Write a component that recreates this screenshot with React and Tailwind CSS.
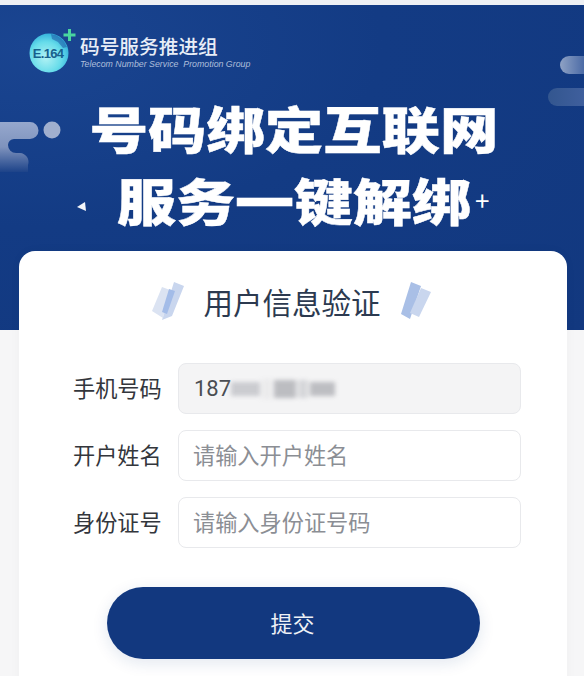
const cjk = "font-['Noto_Sans_CJK_SC','Noto_Sans',sans-serif]";

function Logo() {
  return (
    <svg width="48" height="48" viewBox="0 0 48 48" className="shrink-0">
      <defs>
        <radialGradient id="globe" cx="42%" cy="62%" r="62%">
          <stop offset="0%" stopColor="#b2f2f4" />
          <stop offset="65%" stopColor="#66dcea" />
          <stop offset="100%" stopColor="#35b4dc" />
        </radialGradient>
      </defs>
      <circle cx="20" cy="25" r="19.5" fill="url(#globe)" />
      <path d="M22 6 A19 19 0 0 1 38 19 L34 20 L29 14 L23 11 Z" fill="#1f5aa5" opacity="0.55" />
      <path d="M39 1 h3 v4.5 h4.5 v3 h-4.5 v4.5 h-3 v-4.5 h-4.5 v-3 h4.5 z" fill="#49d6a0" />
      <text x="19" y="30" textAnchor="middle" fontSize="13" fontWeight="700" fill="#17608c" fontFamily="'Liberation Sans', sans-serif" letterSpacing="-0.7">E.164</text>
    </svg>
  );
}

function Stripes({ mirror }) {
  return (
    <svg width="34" height="40" viewBox="0 0 34 40" className="shrink-0 blur-[0.6px]">
      {mirror ? (
        <>
          <polygon points="12,1 22,5 11,38 2,33" fill="#a9bfe6" />
          <polygon points="22,7 32,11 20,36 11,32" fill="#c9d6ee" />
        </>
      ) : (
        <>
          <polygon points="23,1 33,5 21,35 11,39" fill="#c9d6ee" />
          <polygon points="11,6 19,9 12,37 1,30" fill="#dbe3f2" />
          <polygon points="18,8 24,10 16,33 11,31" fill="#a3bce8" />
        </>
      )}
    </svg>
  );
}

function Field({ label, placeholder }) {
  return (
    <div className="flex items-center">
      <span className="w-[105px] shrink-0 pb-[2px] text-[22.2px] leading-none text-[#33363c]">{label}</span>
      <input
        readOnly
        placeholder={placeholder}
        className={`h-[51px] w-[343px] rounded-lg border border-[#e8e9ec] bg-white pb-[3px] pl-[14px] pr-[15px] text-[22.2px] outline-none placeholder:text-[#8b8e94] ${cjk}`}
      />
    </div>
  );
}

export default function App() {
  return (
    <div className={`relative h-[676px] w-[584px] overflow-hidden bg-[#f6f6f7] ${cjk}`}>
      <div className="h-[5px] bg-[#eef0f4]" />

      <header className="relative h-[325px] overflow-hidden bg-[radial-gradient(ellipse_at_5%_12%,#1a4591_0%,#133b84_45%,#12387f_100%)] pt-[23px]">
        {/* decorative shapes */}
        <div className="absolute right-0 top-[51px] h-[18px] w-6 rounded-l-full bg-gradient-to-r from-[#8fa2c4] to-[#4c6ba6]" />
        <div className="absolute right-0 top-[83px] h-[18px] w-9 rounded-l-full bg-gradient-to-r from-[#33568f] to-[#3f5f9d]" />
        <svg width="68" height="52" viewBox="0 0 68 52" className="absolute left-0 top-[116px]">
          <defs>
            <linearGradient id="swoosh" x1="0" y1="0" x2="0" y2="1">
              <stop offset="0%" stopColor="#96a8cd" />
              <stop offset="50%" stopColor="#7f93bd" />
              <stop offset="100%" stopColor="#1d4389" />
            </linearGradient>
          </defs>
          <path d="M0 1 H30 A8.5 8.5 0 0 1 30 18 H14 A6 6 0 0 0 8 24 A8 8 0 0 0 16 32 H20 A9 9 0 0 1 28 44 V51 H0 Z" fill="url(#swoosh)" />
          <circle cx="52" cy="9" r="8.5" fill="#a0afce" />
        </svg>
        <svg width="10" height="10" viewBox="0 0 10 10" className="absolute left-[77px] top-[197px]">
          <polygon points="0,5 8,0 9,9" fill="#f4f6fa" />
        </svg>

        <div className="flex items-start pl-[29px]">
          <Logo />
          <div className="ml-[3px] mt-[6px]">
            <div className="text-[19.7px] font-medium leading-[23px] text-[#e8eef7]">码号服务推进组</div>
            <div className="mt-[2px] whitespace-nowrap font-['Liberation_Sans',sans-serif] text-[8.8px] italic leading-[11px] text-[#aebfdb]">
              Telecom Number Service&nbsp; Promotion Group
            </div>
          </div>
        </div>

        <h1 className="mt-[17px] flex flex-col items-center text-white">
          <span className="ml-[4px] scale-y-[0.85] text-[58.4px] font-black leading-[70px] [-webkit-text-stroke:0.5px_white]">号码绑定互联网</span>
          <span className="ml-[4px] mt-[2px] scale-y-[0.85] text-[59px] font-black leading-[70px] [-webkit-text-stroke:0.5px_white]">
            服务一键解绑
          </span>
          <span className="absolute left-[475px] top-[182px] text-[26px] font-normal leading-none">+</span>
        </h1>
      </header>

      <main className="relative z-10 ml-[19px] -mt-[79px] h-[500px] w-[548px] rounded-t-[16px] bg-white pt-[30px] shadow-[0_0_12px_rgba(0,0,0,0.03)]">
        <div className="flex items-center justify-center gap-[18px] pr-[2px]">
          <Stripes />
          <h2 className="text-[29.5px] leading-10 text-[#2c3a50]">用户信息验证</h2>
          <Stripes mirror />
        </div>

        <div className="mt-[42px] flex flex-col gap-4 pl-[54px]">
          <div className="flex items-center">
            <span className="w-[105px] shrink-0 pb-[2px] text-[22.2px] leading-none text-[#33363c]">手机号码</span>
            <div className="flex h-[51px] w-[343px] items-center rounded-lg border border-[#e8e9ec] bg-[#f4f4f5] pl-[15px] pr-[15px] text-[22px] text-[#4a4d52]">
              <span className="font-['Roboto',sans-serif]">187</span>
              <div className="flex h-5 w-[104px] items-center gap-[2px] blur-[2px]">
                <div className="h-[14px] w-8 bg-[#cbccd0]" />
                <div className="h-5 w-3 bg-[#ebebec]" />
                <div className="h-[18px] w-6 bg-[#bcbdc1]" />
                <div className="h-[18px] w-3 bg-[#d6d7da]" />
                <div className="h-[14px] w-7 bg-[#bdbec2]" />
              </div>
            </div>
          </div>
          <Field label="开户姓名" placeholder="请输入开户姓名" />
          <Field label="身份证号" placeholder="请输入身份证号码" />
        </div>

        <div className="mt-[39px] flex justify-center pl-[1px]">
          <button className="h-[72px] w-[373px] rounded-full bg-[#12387f] pb-[2px] pr-[2px] text-[22px] text-[#eef1f6] shadow-[0_4px_16px_rgba(18,56,127,0.12)]">
            提交
          </button>
        </div>
      </main>
    </div>
  );
}
